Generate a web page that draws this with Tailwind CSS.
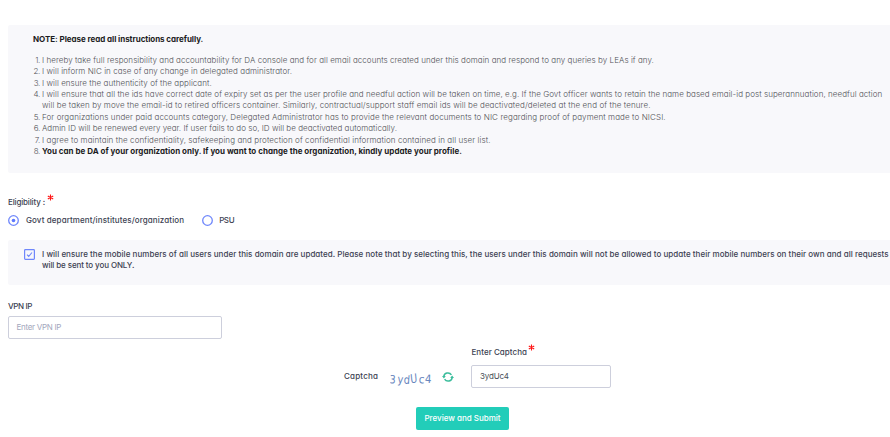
<!DOCTYPE html>
<html lang="en"><head><meta charset="utf-8"><title>DA Registration</title>
<script src="https://cdn.jsdelivr.net/npm/@tailwindcss/browser@4"></script></head>
<body class="h-[437px] w-[890px] overflow-hidden bg-white font-['Inter',sans-serif] text-[8px] leading-[11.375px] font-medium text-[#3c3f52] [font-feature-settings:'cv11'] whitespace-nowrap">
<main class="flex flex-col pt-[25px] pl-2">
  <section class="h-[148px] rounded-l-[2px] bg-[#f8f8fb] pt-[9.4px] pl-[25px]">
    <h1 class="font-bold tracking-[-0.047px] text-[#1c1c22]">NOTE: Please read all instructions carefully.</h1>
    <ol class="mt-[9.2px] font-light text-[#505056]">
      <li class="flex"><span class="mr-[2px] w-[7px] text-right tracking-[-0.3px]">1.</span><span class="tracking-[0.056px]">I hereby take full responsibility and accountability for DA console and for all email accounts created under this domain and respond to any queries by LEAs if any.</span></li>
      <li class="flex"><span class="mr-[2px] w-[7px] text-right tracking-[-0.3px]">2.</span><span class="tracking-[0.064px]">I will inform NIC in case of any change in delegated administrator.</span></li>
      <li class="flex"><span class="mr-[2px] w-[7px] text-right tracking-[-0.3px]">3.</span><span class="tracking-[0.06px]">I will ensure the authenticity of the applicant.</span></li>
      <li class="flex"><span class="mr-[2px] w-[7px] text-right tracking-[-0.3px]">4.</span><span><span class="tracking-[0.066px]">I will ensure that all the ids have correct date of expiry set as per the user profile and needful action will be taken on time, e.g. If the Govt officer wants to retain the name based email-id post superannuation, needful action</span><br><span class="tracking-[0.095px]">will be taken by move the email-id to retired officers container. Similarly, contractual/support staff email ids will be deactivated/deleted at the end of the tenure.</span></span></li>
      <li class="flex"><span class="mr-[2px] w-[7px] text-right tracking-[-0.3px]">5.</span><span class="tracking-[0.098px]">For organizations under paid accounts category, Delegated Administrator has to provide the relevant documents to NIC regarding proof of payment made to NICSI.</span></li>
      <li class="flex"><span class="mr-[2px] w-[7px] text-right tracking-[-0.3px]">6.</span><span class="tracking-[0.024px]">Admin ID will be renewed every year. If user fails to do so, ID will be deactivated automatically.</span></li>
      <li class="flex"><span class="mr-[2px] w-[7px] text-right tracking-[-0.3px]">7.</span><span class="tracking-[0.093px]">I agree to maintain the confidentiality, safekeeping and protection of confidential information contained in all user list.</span></li>
      <li class="flex"><span class="mr-[2px] w-[7px] text-right tracking-[-0.3px]">8.</span><span class="font-bold tracking-[0.011px] text-[#1c1c22]">You can be DA of your organization only. If you want to change the organization, kindly update your profile.</span></li>
    </ol>
  </section>

  <div class="mt-[22px] flex h-[16px] items-start">
    <span class="mt-[2px] w-[39px] tracking-[-0.15px]">Eligibility :</span>
    <svg class="mt-[-1px] size-[7px]" viewBox="0 0 7 7" stroke="#ff1414" stroke-width="1.1" fill="none"><path d="M3.5 0.5V6.5M0.8 2L6.2 5M6.2 2L0.8 5"/></svg>
  </div>
  <div class="mt-[3px] flex h-[12px] items-center">
    <svg class="size-[11px]" viewBox="0 0 11 11" fill="none"><circle cx="5.5" cy="5.5" r="4.8" stroke="#6f87fb" stroke-width="1.3"/><circle cx="5.5" cy="5.5" r="1.8" fill="#5d78ff"/></svg>
    <span class="mt-[1px] ml-[7px] tracking-[0.1px]">Govt department/institutes/organization</span>
    <svg class="ml-[17.5px] size-[11px]" viewBox="0 0 11 11" fill="none"><circle cx="5.5" cy="5.5" r="4.8" stroke="#6f87fb" stroke-width="1.3"/></svg>
    <span class="mt-[1px] ml-[6.5px] tracking-[-0.4px]">PSU</span>
  </div>

  <div class="mt-[14px] flex h-[45px] items-start rounded-l-[2px] bg-[#f8f8fb] pt-[8px] pl-[16px]">
    <svg class="mt-[1px] size-[11px]" viewBox="0 0 11 11" fill="none"><rect x="0.6" y="0.6" width="9.8" height="9.8" rx="0.8" stroke="#6f87fb" stroke-width="1.2"/><path d="M3 5.7L4.7 7.4L8 3.5" stroke="#6f87fb" stroke-width="1.1"/></svg>
    <p class="mt-[0.7px] ml-[7px]"><span class="tracking-[0.037px]">I will ensure the mobile numbers of all users under this domain are updated. Please note that by selecting this, the users under this domain will not be allowed to update their mobile numbers on their own and all requests</span><br><span class="tracking-[-0.11px]">will be sent to you ONLY.</span></p>
  </div>

  <label class="mt-[16.4px] flex h-[14.6px] items-start tracking-[-0.4px]">VPN IP</label>
  <div class="flex h-[23px] w-[214px] items-center rounded-[2px] border border-[#cdcfdc] pl-[7.5px] font-normal tracking-[-0.29px] text-[#a3a7bd]">Enter VPN IP</div>

  <div class="mt-[7px] flex h-[42px] items-start pl-[336px]">
    <span class="mt-[25px] w-[46px] tracking-[0.2px]">Captcha</span>
    <svg class="mt-[25px] h-[17px] w-[42px]" viewBox="0 0 42 17"><g font-family="DejaVu Sans, sans-serif" font-size="11.5" fill="#6685bd"><text transform="translate(-0.5 12.3) scale(.82 1) rotate(3)">3</text><text transform="translate(7.2 12) scale(.85 1) rotate(5)">y</text><text transform="translate(13.5 12.5) scale(.85 1) rotate(5)">d</text><text transform="translate(20.7 12.5) scale(.82 1.1) rotate(-8)">U</text><text transform="translate(28.5 12) scale(.9 1) rotate(5)">c</text><text transform="translate(34.7 11.8) scale(.9 1) rotate(3)">4</text></g></svg>
    <svg class="ml-[10px] mt-[26px] h-[10px] w-[12px]" viewBox="0 0 12 10" fill="none"><path d="M1.8 4.6A4.1 3.9 0 0 1 9.4 2.8M10.2 5.4A4.1 3.9 0 0 1 2.6 7.2" stroke="#3bbd9c" stroke-width="1.5"/><path d="M0 4.1H3.8L1.9 6.6ZM8.2 5.9H12L10.1 3.4Z" fill="#3bbd9c"/></svg>
    <div class="ml-[17px] w-[140px]">
      <div class="flex h-[19px] items-start">
        <span class="mt-[1px] w-[57px] pl-[0.5px] tracking-[0.04px]">Enter Captcha</span>
        <svg class="mt-[-2px] size-[7px]" viewBox="0 0 7 7" stroke="#ff1414" stroke-width="1.1" fill="none"><path d="M3.5 0.5V6.5M0.8 2L6.2 5M6.2 2L0.8 5"/></svg>
      </div>
      <div class="flex h-[23px] items-center rounded-[2px] border border-[#cdcfdc] pl-[8px] font-normal tracking-[-0.17px] text-[#495057]">3ydUc4</div>
    </div>
  </div>

  <button class="mt-[19px] ml-[408px] flex h-[23px] w-[93px] items-center justify-center rounded-[2px] bg-[#22cdb9] pt-[1px] text-white">Preview and Submit</button>
</main>
</body></html>
